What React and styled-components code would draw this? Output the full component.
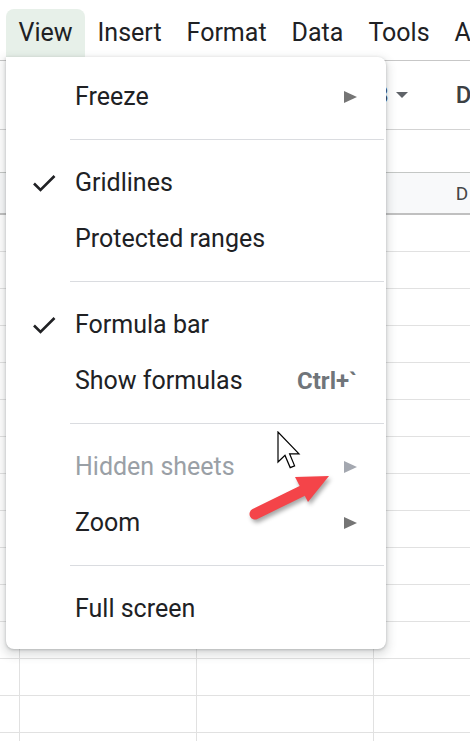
import React from 'react';
import styled, { createGlobalStyle } from 'styled-components';

const GlobalStyle = createGlobalStyle`
  body {
    margin: 0;
    background: #ffffff;
  }
`;

// Page frame
const Page = styled.div`
  position: relative;
  width: 470px;
  height: 741px;
  overflow: hidden;
  background: #fff;
  font-family: Roboto, 'Liberation Sans', sans-serif;
  color: #202124;
`;

// Top menu bar
const MenuBar = styled.div`
  display: flex;
  align-items: flex-end;
  height: 61px;
  box-sizing: border-box;
  padding: 9px 0 0 6px;
  border-bottom: 1px solid #c7c7c7;
  white-space: nowrap;
`;

const MenuTab = styled.div`
  height: 51px;
  box-sizing: border-box;
  padding: 9px 12.5px 0;
  font-size: 25px;
  line-height: 30px;
  border-radius: 8px 8px 0 0;
  background: ${(p) => (p.$active ? '#e7f0e9' : 'transparent')};
`;

// Toolbar (mostly hidden behind the menu)
const Toolbar = styled.div`
  display: flex;
  align-items: center;
  height: 69px;
  box-sizing: border-box;
  padding-left: 350px;
  border-bottom: 1px solid #d3d3d3;
  white-space: nowrap;
`;

const ToolText = styled.span`
  font-size: ${(p) => (p.$bold ? '24px' : '23px')};
  font-weight: ${(p) => (p.$bold ? 500 : 400)};
  color: #3c4043;
`;

const Caret = styled.span`
  width: 0;
  height: 0;
  margin-left: 7px;
  border-left: 6px solid transparent;
  border-right: 6px solid transparent;
  border-top: 6px solid #5f6368;
`;

const ToolDivider = styled.span`
  width: 1px;
  height: 35px;
  margin: 0 31px 0 17px;
  background: #dadce0;
`;

const FormulaRow = styled.div`
  height: 43px;
  box-sizing: border-box;
  border-bottom: 1px solid #c4c7c5;
`;

// Sheet grid
const Grid = styled.div`
  display: grid;
  grid-template-columns: 20px 177px 177px 177px;
`;

const HeadCell = styled.div`
  height: 42px;
  box-sizing: border-box;
  display: flex;
  align-items: center;
  justify-content: center;
  background: #f8f9fa;
  border-bottom: 2px solid #c0c0c0;
  border-right: 1px solid #e1e1e1;
  font-size: 19px;
  color: #444746;
`;

const Cell = styled.div`
  height: 37px;
  box-sizing: border-box;
  border-bottom: 1px solid #e1e1e1;
  border-right: 1px solid #e1e1e1;
`;

// Dropdown menu (overlay)
const Dropdown = styled.div`
  position: absolute;
  left: 6px;
  top: 57px;
  width: 380px;
  padding: 12px 0;
  background: #fff;
  border-radius: 0 8px 8px 8px;
  box-shadow: 0 4px 8px 3px rgba(60, 64, 67, 0.15), 0 1px 3px rgba(60, 64, 67, 0.3);
`;

const Item = styled.div`
  display: flex;
  align-items: center;
  height: 56px;
  padding: 0 29px 0 27px;
  font-size: 25px;
  line-height: 30px;
  color: ${(p) => (p.$disabled ? '#9aa0a6' : '#202124')};
`;

const CheckSlot = styled.span`
  width: 42px;
  display: flex;
  align-items: center;
`;

const Label = styled.span`
  flex: 1;
`;

const Shortcut = styled.span`
  font-size: 24px;
  font-weight: 700;
  color: #70757a;
`;

const SubArrow = styled.span`
  width: 0;
  height: 0;
  border-top: 6.5px solid transparent;
  border-bottom: 6.5px solid transparent;
  border-left: 13px solid ${(p) => (p.$disabled ? '#a4a8b0' : '#757575')};
`;

const Separator = styled.div`
  height: 1px;
  margin: 14px 2px 15px 64px;
  background: #dadce0;
`;

// Overlays drawn on top of the screenshot
const Pointer = styled.svg`
  position: absolute;
  left: 277px;
  top: 431px;
`;

const RedArrow = styled.svg`
  position: absolute;
  left: 240px;
  top: 470px;
  filter: drop-shadow(2px 3px 2px rgba(0, 0, 0, 0.35));
`;

const Check = () => (
  <svg width="23" height="18" viewBox="0 0 23 18">
    <path d="M1 9.5 L7.5 16 L21.5 2" fill="none" stroke="#202124" strokeWidth="2.6" />
  </svg>
);

const tabs = ['View', 'Insert', 'Format', 'Data', 'Tools', 'Ai'];
const ROWS = 15;

function App() {
  return (
    <Page>
      <GlobalStyle />
      <MenuBar>
        {tabs.map((t, i) => (
          <MenuTab key={t} $active={i === 0}>{t}</MenuTab>
        ))}
      </MenuBar>

      <Toolbar>
        <ToolText>123</ToolText>
        <Caret />
        <ToolDivider />
        <ToolText $bold>Default</ToolText>
      </Toolbar>

      <FormulaRow />

      {/* column headers B and C sit under the open menu */}
      <Grid>
        <HeadCell />
        <HeadCell />
        <HeadCell />
        <HeadCell>D</HeadCell>
        {Array.from({ length: ROWS * 4 }).map((_, i) => (
          <Cell key={i} />
        ))}
      </Grid>

      <Dropdown>
        <Item>
          <CheckSlot />
          <Label>Freeze</Label>
          <SubArrow />
        </Item>
        <Separator />
        <Item>
          <CheckSlot><Check /></CheckSlot>
          <Label>Gridlines</Label>
        </Item>
        <Item>
          <CheckSlot />
          <Label>Protected ranges</Label>
        </Item>
        <Separator />
        <Item>
          <CheckSlot><Check /></CheckSlot>
          <Label>Formula bar</Label>
        </Item>
        <Item>
          <CheckSlot />
          <Label>Show formulas</Label>
          <Shortcut>Ctrl+`</Shortcut>
        </Item>
        <Separator />
        <Item $disabled>
          <CheckSlot />
          <Label>Hidden sheets</Label>
          <SubArrow $disabled />
        </Item>
        <Item>
          <CheckSlot />
          <Label>Zoom</Label>
          <SubArrow />
        </Item>
        <Separator />
        <Item>
          <CheckSlot />
          <Label>Full screen</Label>
        </Item>
      </Dropdown>

      <Pointer width="26" height="40" viewBox="0 0 13 20">
        <path
          d="M0.5 0.5 L0.5 15.5 L4 12.2 L6.6 18.3 L8.8 17.4 L6.3 11.4 L11 11.4 Z"
          fill="#fff"
          stroke="#000"
          strokeWidth="0.6"
          strokeLinejoin="miter"
        />
      </Pointer>

      <RedArrow width="100" height="60" viewBox="0 0 100 60">
        <line x1="15" y1="44" x2="62" y2="21" stroke="#f44449" strokeWidth="11" strokeLinecap="round" />
        <polygon points="55,7 89,6 68,32" fill="#f44449" />
      </RedArrow>
    </Page>
  );
}

export default App;
